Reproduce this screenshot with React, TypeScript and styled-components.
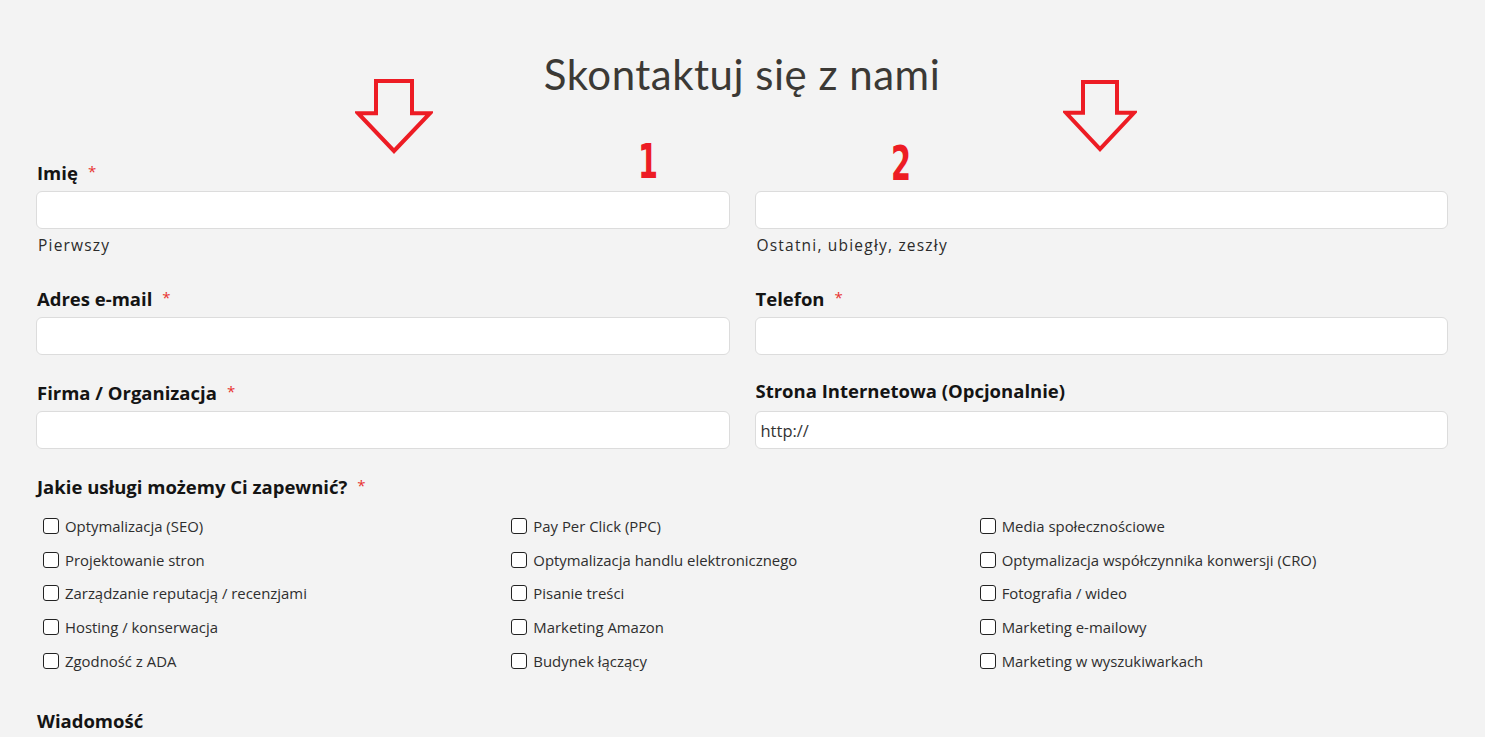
import React from "react";
import styled, { createGlobalStyle } from "styled-components";

const Global = createGlobalStyle`
  html, body { margin: 0; padding: 0; background: #f3f3f3; }
  body { font-family: "Open Sans", Lato, sans-serif; color: #222; }
  * { box-sizing: border-box; }
`;

const Page = styled.div`
  position: relative;
  padding: 50px 37px 0 36px;
  min-height: 737px;
  overflow: hidden;
`;

const Title = styled.h1`
  margin: 0 0 64px;
  text-align: center;
  font-family: Lato, sans-serif;
  font-weight: 400;
  font-size: 42px;
  letter-spacing: 0.5px;
  line-height: 48px;
  color: #3b3935;
`;

const Grid2 = styled.div`
  display: grid;
  grid-template-columns: 1fr 1fr;
  column-gap: 25px;
  margin-bottom: 27px;
`;

const Field = styled.div`
  display: flex;
  flex-direction: column;
`;

const Label = styled.label<{ $empty?: boolean }>`
  display: block;
  height: 18px;
  line-height: 18px;
  font-size: 18.5px;
  font-weight: 700;
  color: #141414;
  margin: 0 0 11px 1px;
  visibility: ${(p) => (p.$empty ? "hidden" : "visible")};
`;

const Req = styled.span`
  color: #e8312f;
  font-size: 15px;
  font-weight: 400;
  vertical-align: 3px;
  margin-left: 10px;
`;

const Input = styled.div`
  height: 38px;
  background: #fff;
  border: 1px solid #dcdcdc;
  border-radius: 6px;
  padding: 0 5px;
  display: flex;
  align-items: center;
  font-size: 16.5px;
  color: #333;
`;

const Help = styled.div`
  height: 20px;
  line-height: 20px;
  margin: 6px 0 6px 2px;
  font-size: 15.5px;
  letter-spacing: 1.2px;
  color: #2b2b2b;
`;

const Section = styled.div`
  margin-bottom: 22px;
`;

const Checks = styled.div`
  display: grid;
  grid-template-columns: repeat(3, 1fr);
  grid-template-rows: repeat(5, 20px);
  grid-auto-flow: column;
  row-gap: 13.7px;
  padding-left: 7px;
  margin-bottom: 41px;
`;

const Check = styled.label`
  display: flex;
  align-items: center;
  gap: 6px;
  font-size: 14.9px;
  color: #2e2e2e;
  line-height: 20px;
`;

const Box = styled.span`
  width: 16px;
  height: 16px;
  border: 1.5px solid #222;
  border-radius: 3px;
  background: #fff;
  flex: none;
`;

const Arrow = styled.svg<{ $x: number; $y: number }>`
  position: absolute;
  left: ${(p) => p.$x}px;
  top: ${(p) => p.$y}px;
`;

const Num = styled.span<{ $x: number; $y: number }>`
  position: absolute;
  left: ${(p) => p.$x}px;
  top: ${(p) => p.$y}px;
  font-family: "DejaVu Sans", sans-serif;
  font-weight: 700;
  font-size: 48px;
  line-height: 48px;
  color: #ed1c24;
  transform: scaleX(0.6);
  transform-origin: left top;
`;

const DownArrow = ({ x, y, w, h }: { x: number; y: number; w: number; h: number }) => (
  <Arrow $x={x} $y={y} width={w + 6} height={h + 6} viewBox={`-3 -3 ${w + 6} ${h + 6}`}>
    <polygon
      points={`${w * 0.25},0 ${w * 0.75},0 ${w * 0.75},${h * 0.46} ${w},${h * 0.46} ${w / 2},${h} 0,${h * 0.46} ${w * 0.25},${h * 0.46}`}
      fill="none"
      stroke="#ed1c24"
      strokeWidth="4"
      strokeLinejoin="miter"
    />
  </Arrow>
);

const col1 = [
  "Optymalizacja (SEO)",
  "Projektowanie stron",
  "Zarządzanie reputacją / recenzjami",
  "Hosting / konserwacja",
  "Zgodność z ADA",
];
const col2 = [
  "Pay Per Click (PPC)",
  "Optymalizacja handlu elektronicznego",
  "Pisanie treści",
  "Marketing Amazon",
  "Budynek łączący",
];
const col3 = [
  "Media społecznościowe",
  "Optymalizacja współczynnika konwersji (CRO)",
  "Fotografia / wideo",
  "Marketing e-mailowy",
  "Marketing w wyszukiwarkach",
];

export default function App() {
  return (
    <>
      <Global />
      <Page>
        <Title>Skontaktuj się z nami</Title>

        <Grid2>
          <Field>
            <Label>
              Imię<Req>*</Req>
            </Label>
            <Input />
            <Help>Pierwszy</Help>
          </Field>
          <Field>
            <Label $empty>&nbsp;</Label>
            <Input />
            <Help>Ostatni, ubiegły, zeszły</Help>
          </Field>
        </Grid2>

        <Grid2>
          <Field>
            <Label>
              Adres e-mail<Req>*</Req>
            </Label>
            <Input />
          </Field>
          <Field>
            <Label>
              Telefon<Req>*</Req>
            </Label>
            <Input />
          </Field>
        </Grid2>

        <Grid2>
          <Field>
            <Label>
              Firma / Organizacja<Req>*</Req>
            </Label>
            <Input />
          </Field>
          <Field>
            <Label>Strona Internetowa (Opcjonalnie)</Label>
            <Input>http://</Input>
          </Field>
        </Grid2>

        <Section>
          <Label>
            Jakie usługi możemy Ci zapewnić?<Req>*</Req>
          </Label>
        </Section>

        <Checks>
          {[...col1, ...col2, ...col3].map((t) => (
            <Check key={t}>
              <Box />
              {t}
            </Check>
          ))}
        </Checks>

        <Label>Wiadomość</Label>

        <DownArrow x={355} y={78} w={72} h={70} />
        <DownArrow x={1063} y={79} w={68} h={67} />
        <Num $x={638} $y={137}>1</Num>
        <Num $x={891} $y={139}>2</Num>
      </Page>
    </>
  );
}
